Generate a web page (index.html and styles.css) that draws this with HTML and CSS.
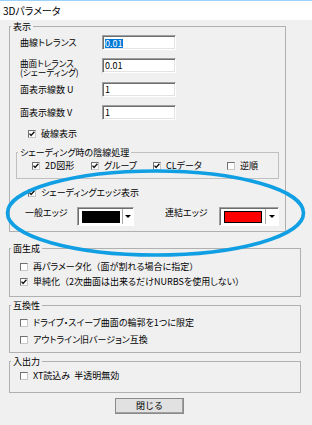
FILE: index.html
```html
<!DOCTYPE html>
<html lang="ja">
<head>
<meta charset="utf-8">
<title>3Dパラメータ</title>
<link rel="stylesheet" href="styles.css">
</head>
<body>
<div class="window">
  <div class="titlebar">3Dパラメータ</div>
  <div class="content">
    <fieldset class="group g-display">
      <legend>表示</legend>
      <div class="gbody display-body">
        <div class="params">
          <span class="plabel">曲線トレランス</span>
          <div class="input"><span class="sel">0.01</span></div>
          <span class="plabel two"><span class="ln">曲面トレランス</span><span class="ln">(シェーディング)</span></span>
          <div class="input">0.01</div>
          <span class="plabel">面表示線数 U</span>
          <div class="input">1</div>
          <span class="plabel">面表示線数 V</span>
          <div class="input">1</div>
        </div>
        <div class="check indent dash-row"><span class="cb on"><svg viewBox="0 0 8 8"><polyline points="1.5,3.6 3.1,5.4 6.4,1.8"/></svg></span>破線表示</div>
        <fieldset class="group g-hidden">
          <legend>シェーディング時の陰線処理</legend>
          <div class="gbody hidden-body">
            <div class="check w-2d"><span class="cb on"><svg viewBox="0 0 8 8"><polyline points="1.5,3.6 3.1,5.4 6.4,1.8"/></svg></span>2D図形</div>
            <div class="check w-group"><span class="cb on"><svg viewBox="0 0 8 8"><polyline points="1.5,3.6 3.1,5.4 6.4,1.8"/></svg></span>グループ</div>
            <div class="check w-cl"><span class="cb on"><svg viewBox="0 0 8 8"><polyline points="1.5,3.6 3.1,5.4 6.4,1.8"/></svg></span>CLデータ</div>
            <div class="check"><span class="cb"></span>逆順</div>
          </div>
        </fieldset>
        <div class="check indent edge-row"><span class="cb on"><svg viewBox="0 0 8 8"><polyline points="1.5,3.6 3.1,5.4 6.4,1.8"/></svg></span>シェーディングエッジ表示</div>
        <div class="edges">
          <span class="elabel e1">一般エッジ</span>
          <div class="combo c1"><span class="swatch black"></span><span class="arrow"></span></div>
          <span class="elabel e2">連結エッジ</span>
          <div class="combo c2"><span class="swatch red"></span><span class="arrow"></span></div>
        </div>
      </div>
    </fieldset>

    <fieldset class="group g-wide g-surface">
      <legend>面生成</legend>
      <div class="gbody surface-body">
        <div class="check line"><span class="cb"></span>再パラメータ化<span class="fw">（</span>面が割れる場合に指定<span class="fw">）</span></div>
        <div class="check line"><span class="cb on"><svg viewBox="0 0 8 8"><polyline points="1.5,3.6 3.1,5.4 6.4,1.8"/></svg></span>単純化<span class="fw">（</span>2次曲面は出来るだけNURBSを使用しない<span class="fw">）</span></div>
      </div>
    </fieldset>

    <fieldset class="group g-wide g-compat">
      <legend>互換性</legend>
      <div class="gbody compat-body">
        <div class="check line"><span class="cb"></span>ドライブ・スイープ曲面の輪郭を1つに限定</div>
        <div class="check line"><span class="cb"></span>アウトライン旧バージョン互換</div>
      </div>
    </fieldset>

    <fieldset class="group g-wide g-io">
      <legend>入出力</legend>
      <div class="gbody io-body">
        <div class="check line"><span class="cb"></span>XT読込み&nbsp;&nbsp;半透明無効</div>
      </div>
    </fieldset>

    <button class="close-btn" type="button">閉じる</button>
  </div>

  <svg class="annotation" width="312" height="425" viewBox="0 0 312 425">
    <ellipse cx="155.5" cy="213" rx="148" ry="42" />
  </svg>
</div>
</body>
</html>
```

FILE: styles.css
```css
* {
  box-sizing: border-box;
}

html,
body {
  margin: 0;
  padding: 0;
}

body {
  width: 312px;
  height: 425px;
  overflow: hidden;
  background: #f0f0f0;
  color: #000;
  font-family: "Noto Sans CJK JP", "Noto Sans", sans-serif;
  font-size: 9px;
  font-feature-settings: "palt";
}

.window {
  position: relative;
  width: 312px;
  height: 425px;
}

.titlebar {
  height: 20px;
  background: #fff;
  border-top: 1px solid #9fd2f8;
  padding-left: 3px;
  line-height: 19px;
  font-size: 10px;
}

.content {
  padding: 1px 0 0 9px;
}

/* group boxes */
fieldset.group {
  margin: 0;
  padding: 0;
  min-width: 0;
  border: 1px solid #b0b0b0;
}

fieldset.group > legend {
  height: 11px;
  line-height: 11px;
  padding: 0 2px;
  margin-left: 1px;
}

.g-display {
  width: 277px;
}

.g-wide {
  width: 292px;
}

.g-wide > legend {
  margin-left: 3px;
}

.g-surface {
  margin-top: 11px !important;
}

.g-compat,
.g-io {
  margin-top: 3px !important;
}

.display-body {
  padding: 3px 6px 5px 6px;
}

/* parameter rows */
.params {
  display: grid;
  grid-template-columns: 82px 74px;
  grid-template-rows: 23px 24px 23px 15px;
  align-items: start;
  margin-left: 4px;
}

.plabel {
  line-height: 15px;
  white-space: nowrap;
}

.plabel.two {
  display: flex;
  flex-direction: column;
  padding-top: 1px;
}

.plabel.two .ln {
  display: block;
  height: 8.5px;
  line-height: 8.5px;
  font-size: 8.6px;
}

.input {
  width: 74px;
  height: 15px;
  background: #fff;
  border: 1px solid;
  border-color: #a0a0a0 #ffffff #ffffff #a0a0a0;
  box-shadow: inset 1px 1px 0 #6d6d6d, inset -1px -1px 0 #e3e3e3;
  padding-left: 2px;
  line-height: 13px;
}

.sel {
  display: inline-block;
  background: #0078d7;
  color: #fff;
  line-height: 9px;
  height: 9px;
  vertical-align: middle;
  margin-top: -1px;
}

/* checkboxes */
.check {
  display: flex;
  align-items: center;
  height: 11px;
  line-height: 11px;
  white-space: nowrap;
}

.check.line {
  height: 15px;
  line-height: 15px;
}

.fw {
  font-feature-settings: normal;
}

.cb {
  flex: none;
  width: 8px;
  height: 8px;
  margin-right: 5px;
  background: #fff;
  border: 1px solid;
  border-color: #707070 #c8c8c8 #c8c8c8 #707070;
  position: relative;
}

.cb svg {
  position: absolute;
  left: -1px;
  top: -1px;
  width: 8px;
  height: 8px;
}

.cb polyline {
  fill: none;
  stroke: #111;
  stroke-width: 1.4;
}

.indent {
  margin-left: 12px;
}

.dash-row {
  margin-top: 8px;
}

.g-hidden {
  margin-top: 8px !important;
  width: 263px;
  border-color: #c0c0c0 !important;
}

.g-hidden > legend {
  margin-left: 4px;
}

.hidden-body {
  display: flex;
  padding: 2px 0 7px 15px;
}

.w-2d {
  width: 59px;
}

.w-group {
  width: 62px;
}

.w-cl {
  width: 74px;
}

.edge-row {
  margin-top: 8px;
}

/* color combos */
.edges {
  display: flex;
  align-items: flex-start;
  margin-top: 9px;
  margin-left: 9px;
}

.elabel {
  line-height: 12px;
  white-space: nowrap;
}

.e1 {
  width: 52px;
}

.e2 {
  width: 54px;
  margin-left: 31px;
}

.combo {
  display: flex;
  align-items: center;
  height: 19px;
  background: #fff;
  border: 1px solid;
  border-color: #a0a0a0 #ffffff #ffffff #a0a0a0;
  box-shadow: inset 1px 1px 0 #6d6d6d;
  padding: 0 0 0 4px;
}

.c1 {
  width: 57px;
}

.c2 {
  width: 60px;
}

.swatch {
  width: 38px;
  height: 12px;
  border: 1px solid #000;
}

.swatch.black {
  background: #000;
}

.swatch.red {
  background: #ff0000;
}

.arrow {
  position: relative;
  margin-left: auto;
  width: 11px;
  height: 15px;
  border-left: 1px solid #a8a8a8;
  background: #fff;
}

.c2 .arrow {
  width: 13px;
}

.arrow::after {
  content: "";
  position: absolute;
  left: 50%;
  top: 6px;
  margin-left: -3px;
  border-left: 3px solid transparent;
  border-right: 3px solid transparent;
  border-top: 3px solid #000;
}

/* lower groups */
.surface-body {
  padding: 5px 0 7px 10px;
}

.compat-body {
  display: flex;
  flex-direction: column;
  gap: 2px;
  padding: 4px 0 5px 10px;
}

.io-body {
  padding: 1px 0 9px 10px;
}

.close-btn {
  display: block;
  margin: 5px 0 0 106px;
  width: 69px;
  height: 16px;
  padding: 0;
  font-family: inherit;
  font-size: 9px;
  line-height: 14px;
  color: #000;
  background: #e1e1e1;
  border: 1px solid;
  border-color: #ffffff #646464 #646464 #ffffff;
  box-shadow: inset -1px -1px 0 #a0a0a0;
  outline: 1px solid #8a8a8a;
  outline-offset: -1px;
}

/* annotation overlay */
.annotation {
  position: absolute;
  left: 0;
  top: 0;
  pointer-events: none;
}

.annotation ellipse {
  fill: none;
  stroke: #119fe4;
  stroke-width: 3.6;
}
```
